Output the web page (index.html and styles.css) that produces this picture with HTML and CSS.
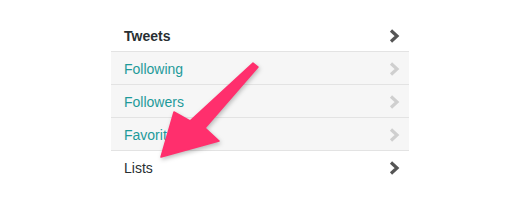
FILE: index.html
```html
<!DOCTYPE html>
<html lang="en">
  <head>
    <meta charset="UTF-8" />
    <title>Profile nav</title>
    <link rel="stylesheet" href="styles.css">
  </head>
  <body>
    <ul class="nav-list">
      <li class="nav-item nav-item-current">
        <a href="#" class="nav-link">Tweets</a>
        <svg class="chevron" width="11" height="14" viewBox="0 0 11 14"><polyline points="2,1.5 8,7 2,12.5" /></svg>
      </li>
      <li class="nav-item">
        <a href="#" class="nav-link">Following</a>
        <svg class="chevron" width="11" height="14" viewBox="0 0 11 14"><polyline points="2,1.5 8,7 2,12.5" /></svg>
      </li>
      <li class="nav-item">
        <a href="#" class="nav-link">Followers</a>
        <svg class="chevron" width="11" height="14" viewBox="0 0 11 14"><polyline points="2,1.5 8,7 2,12.5" /></svg>
      </li>
      <li class="nav-item">
        <a href="#" class="nav-link">Favorites</a>
        <svg class="chevron" width="11" height="14" viewBox="0 0 11 14"><polyline points="2,1.5 8,7 2,12.5" /></svg>
      </li>
      <li class="nav-item nav-item-plain">
        <a href="#" class="nav-link">Lists</a>
        <svg class="chevron" width="11" height="14" viewBox="0 0 11 14"><polyline points="2,1.5 8,7 2,12.5" /></svg>
      </li>
    </ul>

    <!-- annotation arrow -->
    <svg class="annotation" width="520" height="200" viewBox="0 0 520 200">
      <polygon points="253,63 258,67 205,128 219,141 161,157 174,112 190,121" />
    </svg>
  </body>
</html>
```

FILE: styles.css
```css
/* Base */
body {
  margin: 0;
  background-color: #fff;
  font-family: "Liberation Sans", Arial, sans-serif;
}

/* Nav list */
.nav-list {
  list-style: none;
  margin: 19px 0 0 111px;
  padding: 0;
  width: 298px;
}

.nav-item {
  display: flex;
  justify-content: space-between;
  align-items: center;
  height: 32px;
  padding: 1px 9px 0 13px;
  box-sizing: border-box;
  height: 33px;
  background-color: #f6f6f6;
  border-bottom: 1px solid #e3e3e3;
}

.nav-item:last-child {
  border-bottom: none;
}

.nav-link {
  font-size: 14px;
  color: #1e9a9a;
  text-decoration: none;
}

.chevron polyline {
  fill: none;
  stroke: #cfcfcf;
  stroke-width: 3.2;
}

.nav-item-current,
.nav-item-plain {
  background-color: #fff;
}

.nav-item-current .nav-link {
  font-weight: bold;
  color: #292f33;
}

.nav-item-plain .nav-link {
  color: #292f33;
}

.nav-item-current .chevron polyline,
.nav-item-plain .chevron polyline {
  stroke: #555;
}

/* Arrow overlay */
.annotation {
  position: absolute;
  top: 0;
  left: 0;
  pointer-events: none;
  filter: drop-shadow(1px 2px 2px rgba(0, 0, 0, 0.25));
}

.annotation polygon {
  fill: #ff2f6d;
  stroke: #ff2f6d;
  stroke-width: 1.5;
  stroke-linejoin: round;
}
```
